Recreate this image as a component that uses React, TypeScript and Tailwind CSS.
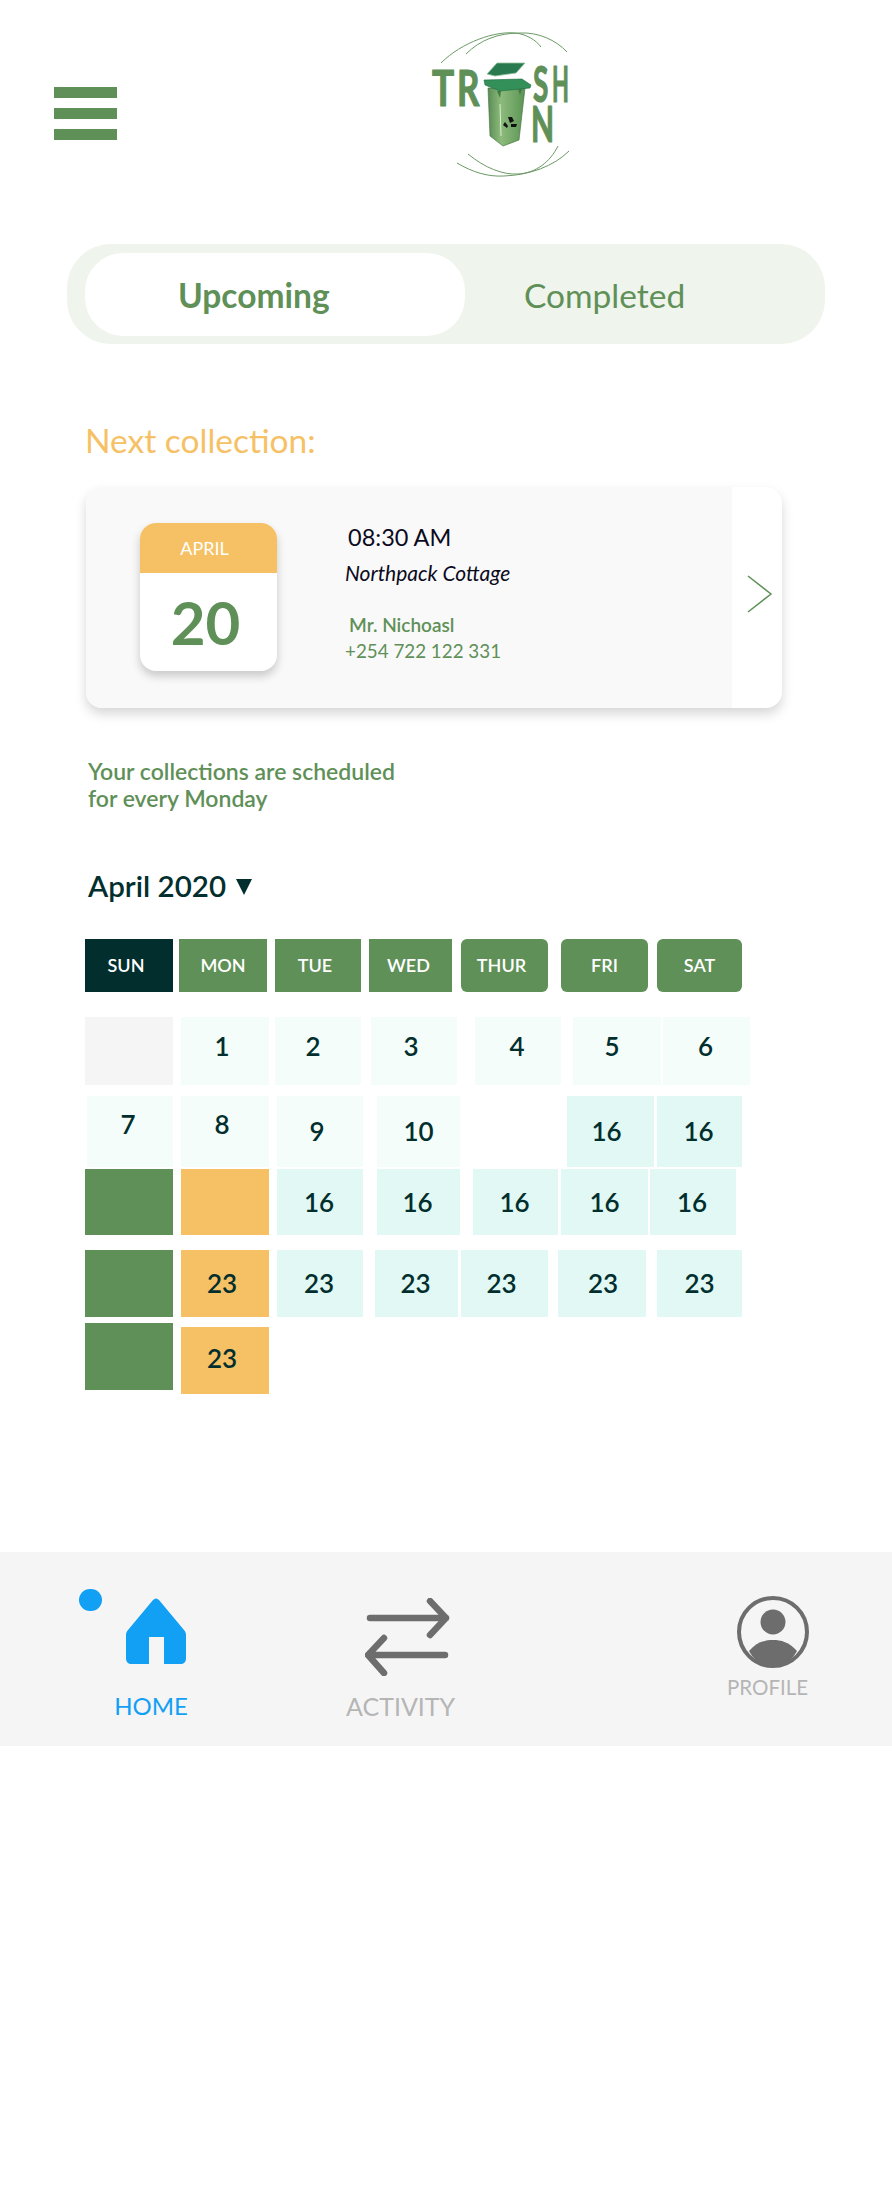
import React from "react";

const Logo = () => (
  <svg width="200" height="170" viewBox="0 0 200 170" className="shrink-0">
    <defs>
      <linearGradient id="body" x1="0" x2="1" y1="0" y2="0">
        <stop offset="0" stopColor="#5a8c54" />
        <stop offset="0.35" stopColor="#8dbb7c" />
        <stop offset="1" stopColor="#5a9454" />
      </linearGradient>
    </defs>
    <g fill="none" stroke="#6c9a66" strokeWidth="1">
      <path d="M41 43C62 22 95 11 115 13C126 14 136 20 141 27" />
      <path d="M66 34C80 20 98 13 120 13C138 12 156 20 167 32" />
      <path d="M68 134C85 148 103 155 118 154C136 153 150 142 158 126" />
      <path d="M57 143C72 152 88 157 104 156C130 155 154 146 169 131" />
    </g>
    <g fill="#5f9058" stroke="#5f9058" strokeWidth="1.200" strokeLinejoin="round" fontWeight="700" fontSize="50">
      <text transform="translate(32 86) scale(0.74 1)">T</text>
      <text transform="translate(57 86) scale(0.7 1)">R</text>
      <text transform="translate(133 82) scale(0.56 1)">S</text>
      <text transform="translate(152 82) scale(0.44 1)">H</text>
      <text transform="translate(131 122) scale(0.6 1)">N</text>
    </g>
    <polygon points="88,68 125,68 119,120 103,126 90,116" fill="url(#body)" stroke="#3f6b3b" strokeWidth="0.6" />
    <line x1="100" y1="84" x2="101" y2="116" stroke="#d9ecd0" strokeWidth="1" />
    <polygon points="87,54 97,43 125,43 116,53 95,56" fill="#2a7a50" stroke="#8fc29c" strokeWidth="0.8" />
    <polygon points="84,60 122,59 131,65 130,68 100,71 85,65" fill="#339059" stroke="#1f6b42" strokeWidth="0.6" />
    <polygon points="97,71 101,71 100,78" fill="#3f7a46" />
    <polygon points="118,69 122,69 120,75" fill="#3f7a46" />
    <g fill="#111">
      <polygon points="108,97 112,97 114,101 110,103" />
      <polygon points="105,102 108,106 107,108 103,105" />
      <polygon points="111,104 117,104 116,107 111,107" />
    </g>
  </svg>
);

const HomeIcon = () => (
  <svg width="60" height="66" viewBox="0 0 60 66" fill="#12a0f5">
    <path d="M27 2C29 0 31 0 33 2L58 32C59.500 34 60 35 60 37V60C60 64 58 66 54 66H38V39H23V66H6C2 66 0 64 0 60V37C0 35 .5 34 2 32Z" />
  </svg>
);

const ArrowsIcon = () => (
  <svg width="85" height="78" viewBox="0 0 85 78" fill="none" stroke="#6d6d6d" strokeWidth="6.500" strokeLinecap="round" strokeLinejoin="round">
    <path d="M5 20H81M65 3L81 20L65 37" />
    <path d="M80 57H3M19 40L3 57L19 75" />
  </svg>
);

const ProfileIcon = () => (
  <svg width="72" height="72" viewBox="0 0 72 72">
    <circle cx="36" cy="36" r="34" fill="none" stroke="#6d6d6d" strokeWidth="4" />
    <circle cx="36" cy="26" r="12.500" fill="#6d6d6d" />
    <path d="M12 55C20 46 28 44 36 44C44 44 52 46 60 55C54 66 45 71 36 71C27 71 18 66 12 55Z" fill="#6d6d6d" />
  </svg>
);

const Cell = ({ className, children }: { className: string; children?: React.ReactNode }) => (
  <div className={"flex items-center justify-center shrink-0 text-[26px] font-semibold text-[#022f2e] " + className}>
    {children}
  </div>
);

const DayHead = ({ className, label }: { className: string; label: string }) => (
  <div className={"flex items-center justify-center shrink-0 h-[53px] text-[18px] font-semibold text-white " + className}>
    {label}
  </div>
);

export default function App() {
  return (
    <div className="w-[892px] h-[2200px] bg-white font-['Lato',sans-serif] flex flex-col">
      <header className="flex items-start h-[244px] shrink-0">
        <div className="ml-[54px] mt-[87px] flex flex-col gap-[10px] w-[63px]">
          <div className="h-[11px] bg-[#5f9058]" />
          <div className="h-[11px] bg-[#5f9058]" />
          <div className="h-[11px] bg-[#5f9058]" />
        </div>
        <div className="ml-[283px] mt-[20px]">
          <Logo />
        </div>
      </header>

      <div className="ml-[67px] w-[758px] h-[100px] rounded-[44px] bg-[#eff4ec] flex items-center shrink-0 text-[33.500px] text-[#5f9058]">
        <div className="ml-[18px] w-[380px] h-[83px] rounded-[38px] bg-white flex items-center pl-[93px] pt-[2px] font-bold">
          Upcoming
        </div>
        <div className="ml-[59px] pt-[2px]">Completed</div>
      </div>

      <h2 className="ml-[85px] mt-[76px] text-[33.500px] leading-[40px] text-[#f6c165] font-normal">Next collection:</h2>

      <div className="ml-[86px] mt-[27px] w-[696px] h-[221px] rounded-[16px] bg-white shadow-[0_6px_12px_rgba(0,0,0,0.16)] flex overflow-hidden shrink-0">
        <div className="w-[646px] bg-[#f9f9f9] flex items-start pl-[54px] pt-[36px]">
          <div className="w-[137px] h-[148px] rounded-[16px] bg-white shadow-[0_5px_10px_rgba(0,0,0,0.2)] overflow-hidden flex flex-col">
            <div className="h-[50px] bg-[#f6c165] flex items-center justify-center pr-[8px] text-[18px] text-white">APRIL</div>
            <div className="flex-1 flex items-center justify-center pr-[6px] text-[60px] leading-none font-bold text-[#5f9058]">20</div>
          </div>
          <div className="ml-[69px] flex flex-col">
            <div className="ml-[2px] -mt-[1px] text-[23.500px] leading-[30px] text-[#0b0b1d]">08:30 AM</div>
            <div className="-ml-[1px] mt-[8px] text-[21px] leading-[26px] italic text-[#0b0b1d]">Northpack Cottage</div>
            <div className="ml-[3px] mt-[26px] text-[19px] leading-[26px] font-semibold text-[#5f9058]">Mr. Nichoasl</div>
            <div className="-ml-[1px] text-[18.800px] leading-[26px] text-[#5f9058]">+254 722 122 331</div>
          </div>
        </div>
        <div className="flex-1 flex items-center pl-[15px] pb-[8px]">
          <svg width="26" height="38" viewBox="0 0 26 38" fill="none" stroke="#5f9058" strokeWidth="1.500">
            <path d="M1 1L24 19L1 37" />
          </svg>
        </div>
      </div>

      <p className="ml-[88px] mt-[50px] text-[23px] leading-[27px] font-semibold text-[#5f9058]">
        Your collections are scheduled
        <br />
        for every Monday
      </p>

      <div className="ml-[88px] mt-[55px] flex items-center text-[29.500px] leading-[38px] font-semibold text-[#022f2e]">
        April 2020
        <span className="ml-[10px] mt-[2px] w-0 h-0 border-l-[8px] border-r-[8px] border-t-[16px] border-l-transparent border-r-transparent border-t-[#022f2e]" />
      </div>

      <div className="ml-[85px] mt-[34px] flex flex-col">
        <div className="flex">
          <DayHead className="w-[88px] pr-[6px] bg-[#022f2e]" label="SUN" />
          <DayHead className="ml-[6px] w-[88px] bg-[#5f9058]" label="MON" />
          <DayHead className="ml-[8px] w-[86px] pr-[6px] bg-[#5f9058]" label="TUE" />
          <DayHead className="ml-[8px] w-[83px] pr-[4px] bg-[#5f9058]" label="WED" />
          <DayHead className="ml-[9px] w-[87px] pr-[6px] rounded-[6px] bg-[#5f9058]" label="THUR" />
          <DayHead className="ml-[13px] w-[87px] rounded-[6px] bg-[#5f9058]" label="FRI" />
          <DayHead className="ml-[9px] w-[85px] rounded-[6px] bg-[#5f9058]" label="SAT" />
        </div>

        <div className="flex mt-[25px] h-[68px]">
          <Cell className="w-[88px] bg-[#f5f5f5]" />
          <Cell className="ml-[8px] w-[88px] bg-[#f4fdfa] pb-[10px] pr-[6px]">1</Cell>
          <Cell className="ml-[6px] w-[86px] bg-[#f4fdfa] pb-[10px] pr-[10px]">2</Cell>
          <Cell className="ml-[10px] w-[86px] bg-[#f4fdfa] pb-[10px] pr-[6px]">3</Cell>
          <Cell className="ml-[18px] w-[86px] bg-[#f4fdfa] pb-[10px] pr-[2px]">4</Cell>
          <Cell className="ml-[12px] w-[88px] bg-[#f4fdfa] pb-[10px] pr-[10px]">5</Cell>
          <Cell className="ml-[2px] w-[87px] bg-[#f4fdfa] pb-[10px] pr-[2px]">6</Cell>
        </div>

        <div className="flex mt-[11px] h-[71px]">
          <Cell className="ml-[2px] w-[86px] bg-[#f4fdfa] pb-[14px] pr-[4px]">7</Cell>
          <Cell className="ml-[8px] w-[88px] bg-[#f4fdfa] pb-[14px] pr-[6px]">8</Cell>
          <Cell className="ml-[8px] w-[86px] bg-[#f4fdfa] pr-[6px]">9</Cell>
          <Cell className="ml-[14px] w-[83px] bg-[#f4fdfa]">10</Cell>
          <Cell className="ml-[107px] w-[87px] bg-[#e1f8f4] pr-[8px]">16</Cell>
          <Cell className="ml-[3px] w-[85px] bg-[#e1f8f4] pr-[2px]">16</Cell>
        </div>

        <div className="flex mt-[2px] h-[66px]">
          <Cell className="w-[88px] bg-[#5f9058]" />
          <Cell className="ml-[8px] w-[88px] bg-[#f6c165]" />
          <Cell className="ml-[8px] w-[86px] bg-[#e1f8f4] pr-[2px]">16</Cell>
          <Cell className="ml-[14px] w-[83px] bg-[#e1f8f4] pr-[2px]">16</Cell>
          <Cell className="ml-[13px] w-[85px] bg-[#e1f8f4] pr-[2px]">16</Cell>
          <Cell className="ml-[3px] w-[87px] bg-[#e1f8f4]">16</Cell>
          <Cell className="ml-[2px] w-[86px] bg-[#e1f8f4] pr-[2px]">16</Cell>
        </div>

        <div className="flex mt-[15px] h-[67px]">
          <Cell className="w-[88px] bg-[#5f9058]" />
          <Cell className="ml-[8px] w-[88px] bg-[#f6c165] pr-[6px]">23</Cell>
          <Cell className="ml-[8px] w-[86px] bg-[#e1f8f4] pr-[2px]">23</Cell>
          <Cell className="ml-[12px] w-[83px] bg-[#e1f8f4] pr-[2px]">23</Cell>
          <Cell className="ml-[3px] w-[87px] bg-[#e1f8f4] pr-[6px]">23</Cell>
          <Cell className="ml-[10px] w-[88px] bg-[#e1f8f4] pl-[2px]">23</Cell>
          <Cell className="ml-[11px] w-[85px] bg-[#e1f8f4]">23</Cell>
        </div>

        <div className="flex items-start mt-[6px]">
          <Cell className="w-[88px] h-[67px] bg-[#5f9058]" />
          <Cell className="ml-[8px] mt-[4px] w-[88px] h-[67px] bg-[#f6c165] pr-[6px] pb-[4px]">23</Cell>
        </div>
      </div>

      <nav className="mt-[158px] h-[194px] bg-[#f5f5f5] flex items-start shrink-0">
        <div className="relative ml-[116px] w-[70px] flex flex-col items-center pt-[46px]">
          <span className="absolute left-[-37px] top-[37px] w-[23px] h-[22px] rounded-full bg-[#12a0f5]" />
          <div className="ml-[10px]">
            <HomeIcon />
          </div>
          <div className="mt-[27px] text-[24px] leading-[30px] text-[#12a0f5]">HOME</div>
        </div>
        <div className="ml-[160px] w-[110px] flex flex-col items-start pt-[46px]">
          <div className="ml-[19px]">
            <ArrowsIcon />
          </div>
          <div className="mt-[15px] text-[25px] leading-[30px] text-[#b5b5b5]">ACTIVITY</div>
        </div>
        <div className="ml-[271px] flex flex-col items-start pt-[44px]">
          <div className="ml-[10px]">
            <ProfileIcon />
          </div>
          <div className="mt-[6px] text-[20.500px] leading-[26px] text-[#b5b5b5]">PROFILE</div>
        </div>
      </nav>
    </div>
  );
}
